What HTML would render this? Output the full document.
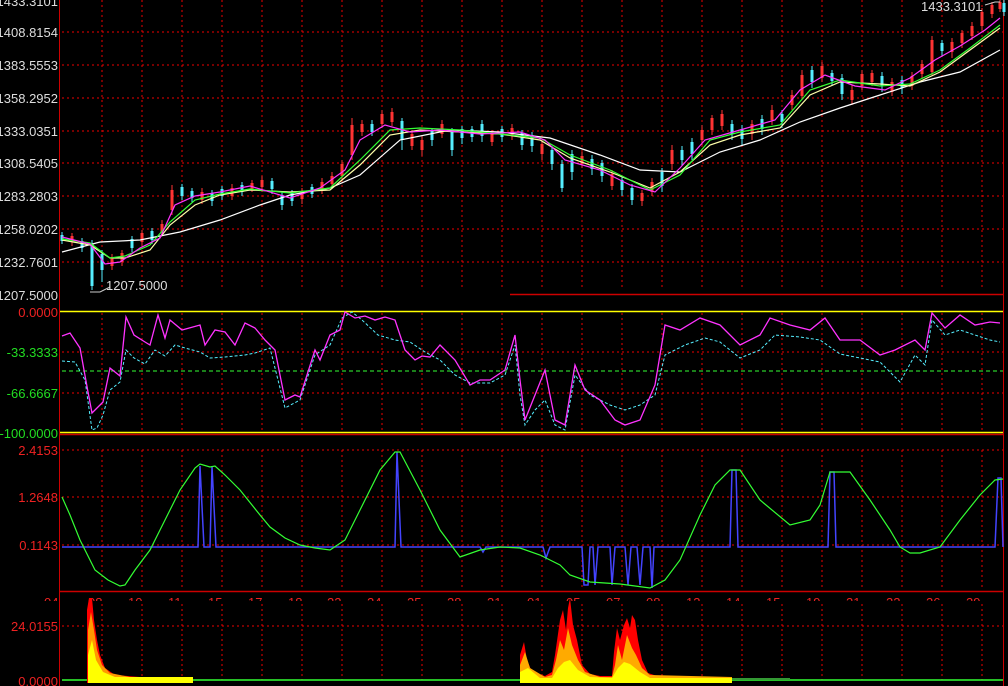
<!DOCTYPE html>
<html><head><meta charset="utf-8"><style>
html,body{margin:0;padding:0;background:#000;width:1008px;height:686px;overflow:hidden}
svg{display:block}
text{font-family:"Liberation Sans",sans-serif;font-size:13px}
</style></head><body>
<svg width="1008" height="686" viewBox="0 0 1008 686">
<rect width="1008" height="686" fill="#000"/>
<!-- grid -->
<g stroke="#e00" stroke-width="1" stroke-dasharray="2,3">
<path d="M102 0V290M142 0V290M182 0V290M222 0V290M262 0V290M302 0V290M342 0V290M382 0V290M422 0V290M462 0V290M502 0V290M542 0V290M582 0V290M622 0V290M662 0V290M702 0V290M742 0V290M782 0V290M822 0V290M862 0V290M902 0V290M942 0V290M982 0V290"/>
<path d="M62 32H1003M62 65H1003M62 98H1003M62 131H1003M62 163H1003M62 196H1003M62 229H1003M62 262H1003"/>
<path d="M102 313V432M142 313V432M182 313V432M222 313V432M262 313V432M302 313V432M342 313V432M382 313V432M422 313V432M462 313V432M502 313V432M542 313V432M582 313V432M622 313V432M662 313V432M702 313V432M742 313V432M782 313V432M822 313V432M862 313V432M902 313V432M942 313V432M982 313V432"/>
<path d="M62 352H1003M62 393H1003"/>
<path d="M102 450V590M142 450V590M182 450V590M222 450V590M262 450V590M302 450V590M342 450V590M382 450V590M422 450V590M462 450V590M502 450V590M542 450V590M582 450V590M622 450V590M662 450V590M702 450V590M742 450V590M782 450V590M822 450V590M862 450V590M902 450V590M942 450V590M982 450V590"/>
<path d="M62 450H1003M62 497H1003M62 545H1003"/>
<path d="M102 604V680M142 604V680M182 604V680M222 604V680M262 604V680M302 604V680M342 604V680M382 604V680M422 604V680M462 604V680M502 604V680M542 604V680M582 604V680M622 604V680M662 604V680M702 604V680M742 604V680M782 604V680M822 604V680M862 604V680M902 604V680M942 604V680M982 604V680"/>
<path d="M62 626H1003"/>
</g>
<!-- frame lines -->
<path d="M59.5 0V686M1003.5 0V686" stroke="#c00" stroke-width="1"/>
<path d="M510 294.5H1003" stroke="#c00" stroke-width="1.5"/>
<path d="M60 311.5H1003M60 432.5H1003" stroke="#ff0" stroke-width="1.5"/>
<path d="M60 434.5H1003M60 591.5H1003" stroke="#c00" stroke-width="1.5"/>
<!-- wicks -->
<g stroke-width="1">
<path stroke="#f33" d="M72 233V246M112 254V270M122 250V266M142 230V246M162 220V236M172 185V215M202 188V204M232 184V200M252 180V192M262 176V190M302 188V204M322 178V194M332 172V188M342 160V180M352 118V160M362 120V136M382 110V128M392 108V126M412 130V150M422 136V156M442 120V138M492 130V146M512 124V140M542 140V160M582 152V168M612 170V190M642 190V206M652 178V196M672 145V170M702 125V145M712 115V135M722 110V130M752 120V140M772 105V125M792 90V110M802 70V100M822 62V82M852 85V105M862 70V90M872 70V86M892 78V96M912 72V90M922 60V78M932 36V75M952 38V58M962 30V48M972 22V40M982 8V30M992 2V18M1000 0V12"/>
<path stroke="#5ef" d="M62 232V244M82 238V252M92 240V290M102 250V282M132 236V252M152 228V244M182 184V200M192 188V202M212 190V206M222 186V200M242 182V196M272 178V194M282 192V210M292 190V206M312 184V198M372 120V136M402 118V150M432 128V146M452 128V156M462 126V144M472 126V142M482 120V142M502 126V142M522 130V150M532 132V152M552 146V170M562 160V192M572 150V180M592 155V175M602 160V182M622 176V196M632 184V205M662 168V192M682 146V166M692 138V160M732 120V140M742 125V145M762 115V135M782 110V128M812 66V88M832 70V86M842 74V100M882 72V92M902 76V94M942 40V56M1004 0V16"/>
</g>
<!-- bodies -->
<g stroke-width="3">
<path stroke="#f33" d="M72 236V242M112 257V266M122 253V262M142 233V242M162 224V232M172 190V210M202 192V200M232 188V196M252 183V189M262 180V187M302 191V199M322 182V190M332 176V184M342 164V176M352 125V155M362 124V132M382 114V124M392 112V122M412 134V146M422 140V150M442 124V134M492 134V142M512 128V136M542 144V154M582 156V164M612 174V186M642 193V201M652 182V192M672 150V164M702 130V140M712 118V130M722 114V126M752 124V134M772 110V120M792 95V105M802 75V96M822 66V78M852 90V100M862 74V86M872 73V82M892 82V92M912 76V86M922 64V74M932 40V72M952 42V52M962 33V43M972 26V36M982 12V26M992 5V14M1000 2V9"/>
<path stroke="#5ef" d="M62 235V241M82 241V248M92 244V286M102 254V270M132 239V248M152 231V240M182 187V196M192 191V198M212 193V201M222 189V196M242 185V192M272 181V189M282 195V205M292 193V201M312 187V194M372 124V132M402 121V140M432 131V140M452 132V150M462 129V138M472 129V137M482 124V136M502 129V137M522 133V145M532 135V146M552 150V164M562 164V188M572 154V172M592 159V169M602 163V176M622 180V190M632 188V200M662 172V186M682 150V160M692 142V154M732 124V134M742 129V139M762 119V129M782 114V122M812 70V82M832 73V81M842 78V94M882 76V86M902 80V88M942 43V51M1004 3V12"/>
</g>
<!-- moving averages -->
<g fill="none" stroke-width="1.2">
<polyline stroke="#fff" points="62,252 100,242 140,240 180,232 220,220 260,205 290,195 330,188 360,175 400,140 450,130 500,132 550,138 600,155 640,170 680,172 720,152 760,140 800,122 840,108 880,95 920,82 960,72 1000,50"/>
<polyline stroke="#ffa" points="62,240 90,245 110,258 125,258 150,250 170,225 195,205 220,195 250,190 290,192 330,190 360,165 390,135 420,130 460,132 500,134 540,140 570,158 610,172 650,188 680,172 710,145 740,135 780,128 810,95 840,82 880,84 910,86 940,72 970,50 1000,28"/>
<polyline stroke="#3f3" points="62,239 90,243 110,258 125,256 150,245 170,222 195,200 220,194 250,189 290,193 330,188 360,160 390,130 420,128 460,130 500,134 540,138 570,155 610,170 650,190 680,175 710,140 740,132 780,125 810,90 840,80 880,86 910,84 940,70 970,48 1000,25"/>
<polyline stroke="#f3f" points="62,237 90,244 105,264 120,262 140,248 160,238 175,205 195,196 220,192 250,186 290,198 320,188 345,170 360,140 385,125 410,132 440,130 480,134 520,132 545,140 565,160 600,170 630,185 655,192 680,168 705,140 740,130 775,120 800,90 825,75 855,86 885,90 910,78 935,60 960,46 985,30 1000,18"/>
</g>
<!-- high/low markers -->
<path d="M90 292H100L110 287" stroke="#ccc" fill="none"/>
<text x="106" y="290" fill="#ddd">1207.5000</text>
<path d="M985 5L995 2H1000" stroke="#ccc" fill="none"/>
<text x="921" y="11" fill="#ddd">1433.3101</text>
<!-- RSI panel -->
<path d="M62 371H1003" stroke="#3f3" stroke-dasharray="4,3"/>
<polyline fill="none" stroke="#5ef" stroke-width="1" stroke-dasharray="3,2" points="62,361 75,362 85,380 92,430 97,428 103,415 110,390 120,382 126,350 134,358 145,364 155,350 165,356 175,345 185,348 200,352 210,358 225,357 245,355 255,353 270,348 285,408 300,400 315,355 330,345 342,318 352,312 362,320 378,335 395,340 410,342 425,352 440,360 455,375 470,383 490,383 505,375 515,345 520,395 525,425 535,410 545,400 555,425 565,430 575,375 590,395 610,405 625,410 640,405 655,395 665,355 685,345 705,338 720,342 740,358 760,350 775,335 800,337 820,340 840,354 860,358 880,362 900,382 915,355 925,365 932,320 945,335 960,330 975,335 990,340 1000,342"/>
<polyline fill="none" stroke="#f3f" stroke-width="1.3" points="62,336 70,333 80,348 88,392 92,413 97,408 103,402 110,368 120,376 126,317 134,335 145,342 150,345 158,315 165,338 170,320 182,330 200,325 205,345 215,330 225,332 235,345 245,323 255,328 265,340 275,350 285,400 295,395 300,397 315,350 320,360 330,335 340,330 345,312 355,318 365,316 375,320 385,317 395,320 405,350 415,360 422,356 430,357 440,345 455,360 470,385 480,380 490,380 505,370 515,335 520,380 525,420 535,395 545,370 555,420 565,425 575,365 585,390 600,400 615,420 625,425 640,420 655,385 665,325 680,330 700,318 720,325 740,345 760,335 770,318 790,325 810,330 825,318 840,340 860,340 880,355 895,350 915,340 925,350 932,313 945,328 960,315 975,325 990,322 1000,323"/>
<!-- panel 3 -->
<polyline fill="none" stroke="#44f" stroke-width="1.5" points="62,547 198,547 200,466 204,547 210,547 212,466 216,547 395,547 397,452 401,547 480,547 483,552 486,547 543,547 546,558 550,547 582,547 584,585 588,585 590,547 593,547 595,585 598,547 610,547 612,585 615,547 625,547 628,585 631,547 637,547 640,585 643,547 650,547 652,588 654,547 730,547 732,470 736,470 738,547 828,547 830,472 834,472 836,547 995,547 998,478 1001,478 1003,547"/>
<polyline fill="none" stroke="#3f3" stroke-width="1.2" points="62,497 70,515 80,540 95,570 108,580 120,586 125,585 135,570 150,550 165,520 180,490 195,468 200,464 210,467 215,466 225,475 240,490 260,515 270,527 285,538 300,545 315,548 330,550 345,540 360,510 380,470 395,452 400,452 420,490 440,530 460,557 480,550 500,547 520,548 540,555 560,565 570,575 590,582 620,584 650,588 665,580 680,560 700,515 715,485 730,470 740,470 760,500 790,525 810,520 820,505 830,472 850,472 870,500 890,530 900,547 910,553 920,553 940,547 960,520 980,495 995,480 1003,479"/>
<!-- date labels (clipped) -->
<clipPath id="c"><rect x="0" y="592" width="1008" height="9"/></clipPath>
<g clip-path="url(#c)" fill="#e22" font-size="13">
<text x="44" y="607">04</text><text x="88" y="607">08</text><text x="128" y="607">10</text><text x="168" y="607">11</text><text x="208" y="607">15</text><text x="248" y="607">17</text><text x="288" y="607">18</text><text x="327" y="607">22</text><text x="367" y="607">24</text><text x="407" y="607">25</text><text x="447" y="607">28</text><text x="487" y="607">31</text><text x="527" y="607">01</text><text x="566" y="607">05</text><text x="606" y="607">07</text><text x="646" y="607">08</text><text x="686" y="607">13</text><text x="726" y="607">14</text><text x="766" y="607">15</text><text x="806" y="607">19</text><text x="846" y="607">21</text><text x="886" y="607">22</text><text x="926" y="607">26</text><text x="966" y="607">29</text>
</g>
<!-- panel 4 -->
<path d="M62 680H1003" stroke="#3f3" stroke-width="1.5"/>
<path d="M87 683V610L89 598L92 598L94 620L97 640L100 655L105 668L115 675L140 677L193 677V683Z" fill="#f00"/>
<path d="M88 683V630L91 612L94 630L97 650L102 665L110 673L130 677L193 677V683Z" fill="#f90"/>
<path d="M88 683V655L92 640L96 660L103 672L115 677L193 677V683Z" fill="#ff0"/>
<path d="M520 683V655L524 642L527 660L532 672L545 676L552 672L555 655L560 620L563 610L566 630L568 608L570 598L573 625L577 640L582 665L590 674L600 676L612 676L614 652L617 628L620 640L624 625L627 618L630 628L632 615L635 620L638 640L642 660L648 673L660 677L732 677V683Z" fill="#f00"/>
<path d="M520 683V665L525 652L530 668L545 677L552 675L556 660L560 640L564 650L568 628L572 645L578 660L585 672L600 677L612 677L615 665L618 645L622 660L627 635L632 648L636 655L642 668L650 675L732 677V683Z" fill="#fa0"/>
<path d="M520 683V672L528 668L540 678L552 678L558 668L564 662L570 660L578 670L590 677L612 678L618 668L624 662L630 664L640 672L650 678L732 678V683Z" fill="#ff0"/>
<path d="M732 679H790" stroke="#393" stroke-width="2"/>
<!-- axis labels -->
<g text-anchor="end" font-size="13">
<text x="58" y="6" fill="#ddd">1433.3101</text>
<text x="58" y="37" fill="#ddd">1408.8154</text>
<text x="58" y="70" fill="#ddd">1383.5553</text>
<text x="58" y="103" fill="#ddd">1358.2952</text>
<text x="58" y="136" fill="#ddd">1333.0351</text>
<text x="58" y="168" fill="#ddd">1308.5405</text>
<text x="58" y="201" fill="#ddd">1283.2803</text>
<text x="58" y="234" fill="#ddd">1258.0202</text>
<text x="58" y="267" fill="#ddd">1232.7601</text>
<text x="58" y="300" fill="#ddd">1207.5000</text>
<text x="58" y="317" fill="#e22">0.0000</text>
<text x="58" y="357" fill="#2d2">-33.3333</text>
<text x="58" y="398" fill="#2d2">-66.6667</text>
<text x="58" y="438" fill="#2d2">-100.0000</text>
<text x="58" y="455" fill="#e22">2.4153</text>
<text x="58" y="502" fill="#e22">1.2648</text>
<text x="58" y="550" fill="#e22">0.1143</text>
<text x="58" y="631" fill="#e22">24.0155</text>
<text x="58" y="686" fill="#e22">0.0000</text>
</g>
</svg>
</body></html>
